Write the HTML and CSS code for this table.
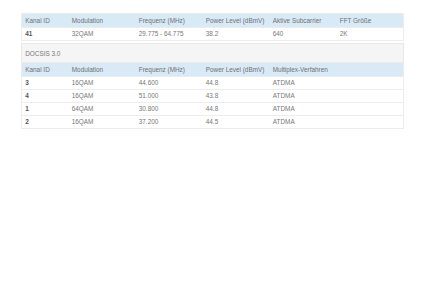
FILE: index.html
```html
<!DOCTYPE html>
<html lang="de">
<head>
<meta charset="utf-8">
<title>Kanäle</title>
<link rel="stylesheet" href="styles.css">
</head>
<body>
<div class="wrap">
  <table class="grid">
    <colgroup>
      <col class="c-id"><col class="c-std"><col class="c-std"><col class="c-std"><col class="c-std"><col>
    </colgroup>
    <thead>
      <tr><th>Kanal ID</th><th>Modulation</th><th>Frequenz (MHz)</th><th>Power Level (dBmV)</th><th>Aktive Subcarrier</th><th>FFT Größe</th></tr>
    </thead>
    <tbody>
      <tr><td class="id">41</td><td>32QAM</td><td>29.775 - 64.775</td><td>38.2</td><td>640</td><td>2K</td></tr>
    </tbody>
  </table>

  <div class="section">DOCSIS 3.0</div>

  <table class="grid">
    <colgroup>
      <col class="c-id"><col class="c-std"><col class="c-std"><col class="c-std"><col>
    </colgroup>
    <thead>
      <tr><th>Kanal ID</th><th>Modulation</th><th>Frequenz (MHz)</th><th>Power Level (dBmV)</th><th>Multiplex-Verfahren</th></tr>
    </thead>
    <tbody>
      <tr><td class="id">3</td><td>16QAM</td><td>44.600</td><td>44.8</td><td>ATDMA</td></tr>
      <tr><td class="id">4</td><td>16QAM</td><td>51.000</td><td>43.8</td><td>ATDMA</td></tr>
      <tr><td class="id">1</td><td>64QAM</td><td>30.800</td><td>44.8</td><td>ATDMA</td></tr>
      <tr><td class="id">2</td><td>16QAM</td><td>37.200</td><td>44.5</td><td>ATDMA</td></tr>
    </tbody>
  </table>
</div>
</body>
</html>
```

FILE: styles.css
```css
html, body {
  margin: 0;
  padding: 0;
  background: #ffffff;
}

body {
  font-family: "Liberation Sans", Arial, sans-serif;
  font-size: 6.4px;
  color: #777777;
}

.wrap {
  width: 90%;
  margin: 0 auto;
  padding-top: 13px;
}

.grid {
  width: 100%;
  border-collapse: collapse;
  table-layout: fixed;
  border: 1px solid #ececec;
}

.c-id { width: 47px; }
.c-std { width: 67px; }

.grid th {
  background: #d9eaf7;
  color: #6f6f6f;
  font-weight: normal;
  text-align: left;
  height: 13px;
  line-height: 13px;
  padding: 0 3px;
  white-space: nowrap;
}

.grid td {
  height: 12px;
  line-height: 12px;
  padding: 0 3px;
  border-top: 1px solid #ededed;
  white-space: nowrap;
}

.grid td.id {
  font-weight: bold;
  color: #555555;
}

.section {
  margin-top: 2px;
  height: 19px;
  line-height: 19px;
  padding: 0 3px;
  background: #f5f5f5;
  border: 1px solid #e8e8e8;
  border-bottom: none;
  box-sizing: border-box;
  color: #777777;
}
```
